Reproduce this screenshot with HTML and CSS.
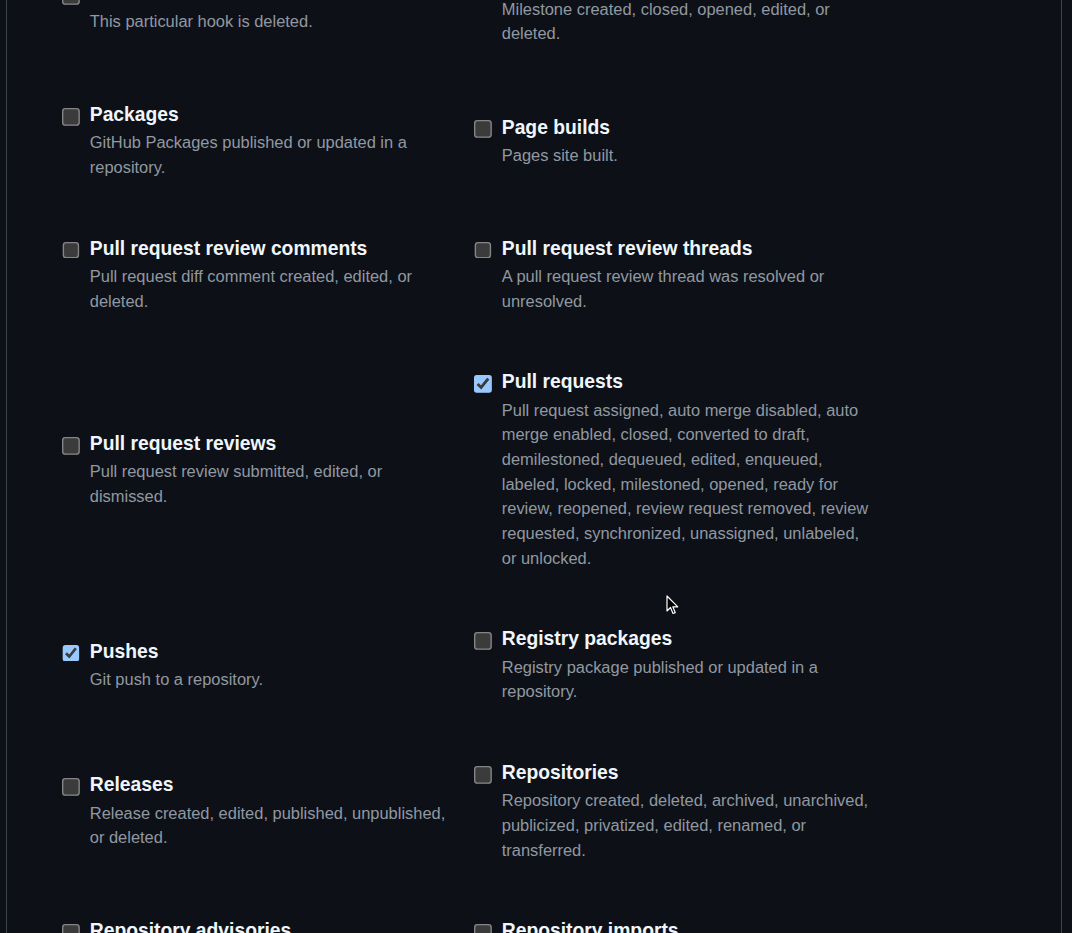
FILE: index.html
```html
<!DOCTYPE html>
<html lang="en">
<head>
<meta charset="utf-8">
<title>Webhook events</title>
<link rel="stylesheet" href="styles.css">
</head>
<body>
<div class="box">
  <ul class="events">
    <li class="event"><input type="checkbox" class="cb"><span class="title">Meta</span><span class="note">This particular hook is deleted.</span></li>
    <li class="event"><input type="checkbox" class="cb"><span class="title">Milestones</span><span class="note">Milestone created, closed, opened, edited, or deleted.</span></li>

    <li class="event"><input type="checkbox" class="cb"><span class="title">Packages</span><span class="note">GitHub Packages published or updated in a repository.</span></li>
    <li class="event"><input type="checkbox" class="cb"><span class="title">Page builds</span><span class="note">Pages site built.</span></li>

    <li class="event"><input type="checkbox" class="cb"><span class="title">Pull request review comments</span><span class="note">Pull request diff comment created, edited, or deleted.</span></li>
    <li class="event"><input type="checkbox" class="cb"><span class="title">Pull request review threads</span><span class="note">A pull request review thread was resolved or unresolved.</span></li>

    <li class="event"><input type="checkbox" class="cb"><span class="title">Pull request reviews</span><span class="note">Pull request review submitted, edited, or dismissed.</span></li>
    <li class="event"><input type="checkbox" class="cb" checked><span class="title">Pull requests</span><span class="note">Pull request assigned, auto merge disabled, auto merge enabled, closed, converted to draft, demilestoned, dequeued, edited, enqueued, labeled, locked, milestoned, opened, ready for review, reopened, review request removed, review requested, synchronized, unassigned, unlabeled, or unlocked.</span></li>

    <li class="event"><input type="checkbox" class="cb" checked><span class="title">Pushes</span><span class="note">Git push to a repository.</span></li>
    <li class="event"><input type="checkbox" class="cb"><span class="title">Registry packages</span><span class="note">Registry package published or updated in a repository.</span></li>

    <li class="event"><input type="checkbox" class="cb"><span class="title">Releases</span><span class="note">Release created, edited, published, unpublished, or deleted.</span></li>
    <li class="event"><input type="checkbox" class="cb"><span class="title">Repositories</span><span class="note">Repository created, deleted, archived, unarchived, publicized, privatized, edited, renamed, or transferred.</span></li>

    <li class="event"><input type="checkbox" class="cb"><span class="title">Repository advisories</span><span class="note">Repository advisory published or withdrawn.</span></li>
    <li class="event"><input type="checkbox" class="cb"><span class="title">Repository imports</span><span class="note">Repository import succeeded, failed, or cancelled.</span></li>
  </ul>
</div>
<svg class="cursor" width="14" height="21" viewBox="0 0 14 21" aria-hidden="true">
  <path d="M1 1 L1 16 L4.5 12.5 L7 18.5 L9.2 17.6 L6.8 11.8 L11.8 11.8 Z" fill="#000" stroke="#fff" stroke-width="1.2" stroke-linejoin="round"/>
</svg>
</body>
</html>
```
FILE: styles.css
```css
html, body {
  margin: 0;
  padding: 0;
  background: #0d1117;
  color-scheme: dark;
  overflow: hidden;
}
body {
  height: 933px;
  font-family: "Liberation Sans", Arial, sans-serif;
}
.box {
  margin: 0 10px 0 6px;
  height: 100%;
  border-left: 1px solid #3d444d;
  border-right: 1px solid #3d444d;
  overflow: hidden;
}
.events {
  list-style: none;
  margin: -33.4px 0 0 0;
  padding: 0 0 0 55.4px;
  display: grid;
  grid-template-columns: 412px 412px;
  row-gap: 54.2px;
  align-items: center;
}
.event {
  display: grid;
  grid-template-columns: 27.4px 372px;
  align-items: start;
}
.cb {
  grid-column: 1;
  grid-row: 1 / span 2;
  width: 13px;
  height: 13px;
  margin: 5.7px 0 0 0;
  zoom: 1.371;
}
.title {
  grid-column: 2;
  padding-top: 1px;
  font-weight: 700;
  font-size: 19.3px;
  line-height: 28.8px;
  color: #f0f6fc;
}
.note {
  grid-column: 2;
  margin-top: 0.3px;
  font-size: 16.45px;
  line-height: 24.67px;
  color: #9198a1;
}
.cursor {
  position: absolute;
  left: 666px;
  top: 595px;
}
```
